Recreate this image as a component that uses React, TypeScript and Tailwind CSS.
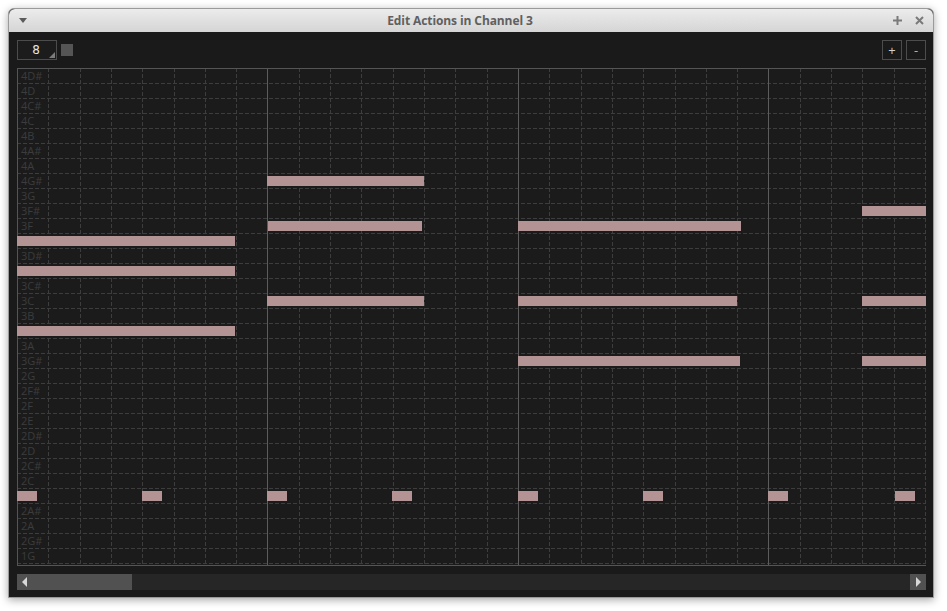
import React from "react";

const labels = [
  "4D#", "4D", "4C#", "4C", "4B", "4A#", "4A", "4G#", "3G", "3F#", "3F", "3E", "3D#", "3D", "3C#", "3C", "3B", "3A#", "3A", "3G#",
  "2G", "2F#", "2F", "2E", "2D#", "2D", "2C#", "2C", "2B", "2A#", "2A", "2G#", "1G",
];

// [row, xStart, xEnd] in page coords
const notes: [number, number, number][] = [
  [7, 267, 424],
  [9, 862, 926],
  [10, 268, 422],
  [10, 518, 741],
  [11, 17, 235],
  [13, 17, 235],
  [15, 267, 424],
  [15, 518, 737],
  [15, 862, 926],
  [17, 17, 235],
  [19, 518, 740],
  [19, 862, 926],
  [28, 17, 37],
  [28, 142, 162],
  [28, 267, 287],
  [28, 392, 412],
  [28, 518, 538],
  [28, 643, 663],
  [28, 768, 788],
  [28, 895, 915],
];

const GW = 909;
const GH = 498;
const COL = 908 / 29;

function GridLines() {
  const v: React.ReactNode[] = [];
  for (let k = 1; k <= 29; k++) {
    const x = Math.round(k * COL) + 0.5;
    const bar = k === 8 || k === 16 || k === 24;
    v.push(
      <line
        key={"v" + k}
        x1={x}
        x2={x}
        y1={0}
        y2={GH}
        stroke={bar ? "#5c5c5c" : "#3d3d3d"}
        strokeDasharray={bar ? undefined : "4 2"}
      />
    );
  }
  const h: React.ReactNode[] = [];
  for (let i = 1; i <= 33; i++) {
    const y = 15 * i + 0.5;
    h.push(<line key={"h" + i} x1={0} x2={GW} y1={y} y2={y} stroke="#3d3d3d" strokeDasharray="4 2" />);
  }
  return (
    <svg className="absolute left-0 top-0" width={GW} height={GH}>
      {h}
      {v}
      <line x1={0} x2={GW} y1={0.5} y2={0.5} stroke="#555555" />
      <line x1={0} x2={GW} y1={GH - 0.5} y2={GH - 0.5} stroke="#555555" />
      <line x1={0.5} x2={0.5} y1={0} y2={GH} stroke="#555555" />
    </svg>
  );
}

export default function App() {
  return (
    <div className="w-[947px] h-[611px] bg-white pt-2 pl-2" style={{ fontFamily: '"Open Sans", "DejaVu Sans", sans-serif' }}>
      <div className="w-[926px] h-[590px] flex flex-col rounded-t-[6px] border border-[#9a9a9a] shadow-[0_2px_8px_rgba(0,0,0,0.35)] bg-[#1a1a1a]">
        {/* title bar */}
        <div className="h-[23px] shrink-0 rounded-t-[6px] bg-gradient-to-b from-[#ececec] to-[#d5d5d5] flex items-center px-[10px] relative">
          <svg width="8" height="5" viewBox="0 0 8 5">
            <path d="M0 0 L8 0 L4 5 Z" fill="#5a5a5a" />
          </svg>
          <div className="absolute inset-0 pr-[22px] flex items-center justify-center text-[12px] font-bold text-[#606060] tracking-[-0.1px]">
            Edit Actions in Channel 3
          </div>
          <div className="ml-auto flex items-center gap-[13px] mr-[-1px]">
            <svg width="9" height="9" viewBox="0 0 9 9">
              <path d="M4.5 0 V9 M0 4.5 H9" stroke="#7a7a7a" strokeWidth="2" />
            </svg>
            <svg width="9" height="9" viewBox="0 0 9 9">
              <path d="M1 1 L8 8 M8 1 L1 8" stroke="#7a7a7a" strokeWidth="2" />
            </svg>
          </div>
        </div>
        {/* body */}
        <div className="flex-1 flex flex-col pl-2 pr-[7px] pt-2">
          {/* toolbar */}
          <div className="h-[20px] flex items-center">
            <div className="relative w-[40px] h-[20px] border border-[#4c4c4c] bg-[#1c1c1c] flex items-center justify-center pr-[2px] text-[12px] text-[#e6e6e6]" style={{ fontFamily: '"DejaVu Sans", sans-serif' }}>
              8
              <svg width="6" height="6" viewBox="0 0 6 6" className="absolute right-[1px] bottom-[1px]">
                <path d="M6 0 L6 6 L0 6 Z" fill="#7c7c7c" />
              </svg>
            </div>
            <div className="ml-1 w-[12px] h-[12px] bg-[#555555]" />
            <div className="ml-auto flex gap-1">
              <div className="w-[20px] h-[20px] border border-[#4c4c4c] flex items-center justify-center text-[13px] text-[#d0d0d0] leading-none">+</div>
              <div className="w-[20px] h-[20px] border border-[#4c4c4c] flex items-center justify-center text-[13px] text-[#b0b0b0] leading-none">-</div>
            </div>
          </div>
          {/* grid */}
          <div className="relative mt-2 w-[909px] h-[498px] bg-[#1b1b1b]">
            <GridLines />
            <div className="absolute left-0 top-0 flex flex-col">
              {labels.map((l, i) => (
                <div key={i} className="h-[15px] pl-[4px] text-[11px] leading-[15px] text-[#3c3c3c]">
                  {l}
                </div>
              ))}
            </div>
            {notes.map(([r, a, b], i) => (
              <div
                key={i}
                className="absolute h-[10px] bg-[#b39393]"
                style={{ top: r * 15 + 3, left: a - 17, width: b - a }}
              />
            ))}
          </div>
          {/* scrollbar */}
          <div className="mt-2 w-[909px] h-[16px] bg-[#262626] flex">
            <div className="w-[115px] h-full bg-[#515151] flex items-center pl-[5px]">
              <svg width="5" height="10" viewBox="0 0 5 10">
                <path d="M5 0 L0 5 L5 10 Z" fill="#d8d8d8" />
              </svg>
            </div>
            <div className="ml-auto w-[16px] h-full bg-[#515151] flex items-center justify-center">
              <svg width="5" height="10" viewBox="0 0 5 10">
                <path d="M0 0 L5 5 L0 10 Z" fill="#d8d8d8" />
              </svg>
            </div>
          </div>
        </div>
      </div>
    </div>
  );
}
